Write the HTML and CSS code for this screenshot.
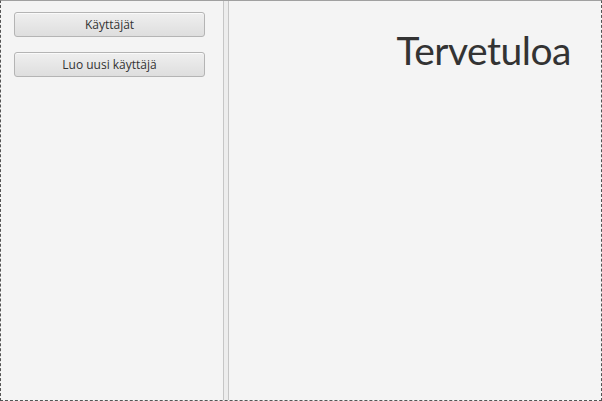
FILE: index.html
```html
<!DOCTYPE html>
<html>
<head>
<meta charset="utf-8">
<link rel="stylesheet" href="styles.css">
</head>
<body>
<div class="window">
  <div class="sidebar">
    <button class="btn">Käyttäjät</button>
    <button class="btn">Luo uusi käyttäjä</button>
  </div>
  <div class="divider"></div>
  <div class="main">
    <h1 class="title">Tervetuloa</h1>
  </div>
</div>
</body>
</html>
```

FILE: styles.css
```css
html, body {
  margin: 0;
  padding: 0;
  width: 602px;
  height: 401px;
  overflow: hidden;
  background: #f4f4f4;
}
.window {
  box-sizing: border-box;
  width: 602px;
  height: 401px;
  display: flex;
  background: #f4f4f4;
  border-top: 1px solid #a0a0a0;
  border-left: 1px dashed #555;
  border-right: 1px dashed #555;
  border-bottom: 1px dashed #555;
  font-family: "Open Sans", "Noto Sans", sans-serif;
}
.sidebar {
  width: 222px;
  flex: none;
  box-sizing: border-box;
  padding: 11px 0 0 13px;
  display: flex;
  flex-direction: column;
  gap: 15px;
}
.btn {
  width: 191px;
  height: 25px;
  box-sizing: border-box;
  border: 1px solid #b4b4b4;
  border-radius: 3px;
  background: linear-gradient(#efefef, #dedede);
  box-shadow: inset 0 1px 0 #fafafa;
  font-family: "Open Sans", "Noto Sans", sans-serif;
  font-size: 12px;
  color: #333;
  padding: 0;
  line-height: 23px;
}
.divider {
  width: 6px;
  flex: none;
  border-left: 1px solid #c6c6c6;
  border-right: 1px solid #c6c6c6;
  background: #ededed;
  box-sizing: border-box;
}
.main {
  flex: 1;
  display: flex;
  flex-direction: column;
  align-items: flex-end;
  padding: 0 30px 0 0;
}
.title {
  margin: 23px 0 0 0;
  font-family: "Lato", "Open Sans", sans-serif;
  font-weight: 400;
  font-size: 39px;
  letter-spacing: -0.5px;
  line-height: 52px;
  color: #333;
}
```
